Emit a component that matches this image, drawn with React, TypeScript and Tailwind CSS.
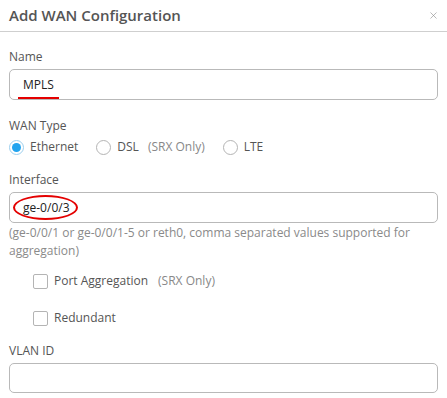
import { X } from 'lucide-react';

function Radio({ checked, label, note }: { checked?: boolean; label: string; note?: string }) {
    return (
        <label className="flex items-center">
            <span
                className={`flex h-[15px] w-[15px] items-center justify-center rounded-full border bg-white ${
                    checked ? 'border-[#9ccfee]' : 'border-[#b4b4b4]'
                }`}
            >
                {checked && <span className="h-[9px] w-[9px] rounded-full bg-[#22a4ef]" />}
            </span>
            <span className="ml-[6px] text-[#555]">{label}</span>
            {note && <span className="ml-[9px] text-[#888]">{note}</span>}
        </label>
    );
}

function Check({ label, note }: { label: string; note?: string }) {
    return (
        <label className="flex items-center pl-[24px]">
            <span className="h-[15px] w-[15px] rounded-[2px] border border-[#b4b4b4] bg-white" />
            <span className="ml-[6px] text-[#555]">{label}</span>
            {note && <span className="ml-[10px] text-[#888]">{note}</span>}
        </label>
    );
}

export default function App() {
    return (
        <div
            className="h-[398px] w-[447px] overflow-hidden bg-white text-[12px]"
            style={{ fontFamily: '"Open Sans", sans-serif' }}
        >
            {/* Cabeçalho */}
            <div className="flex h-[32px] items-center justify-between border-b border-[#cfcfcf] pl-[9px] pr-[8px]">
                <h1 className="text-[15px] font-semibold text-[#555]">Add WAN Configuration</h1>
                <X size={11} strokeWidth={1.3} className="text-[#888]" />
            </div>

            <div className="flex flex-col px-[9px] pt-[16px]">
                <div className="text-[#555]">Name</div>
                <div className="relative mt-[3px] flex h-[31px] items-center rounded-[5px] border border-[#b9b9b9] pl-[13px] text-[#222]">
                    MPLS
                    <span className="absolute bottom-[0px] left-[8px] h-[2px] w-[41px] bg-[#e40000]" />
                </div>

                <div className="mt-[17px] text-[#555]">WAN Type</div>
                <div className="mt-[3px] flex items-center gap-[18px]">
                    <Radio checked label="Ethernet" />
                    <Radio label="DSL" note="(SRX Only)" />
                    <Radio label="LTE" />
                </div>

                <div className="mt-[15px] text-[#555]">Interface</div>
                <div className="relative mt-[3px] flex h-[31px] items-center rounded-[5px] border border-[#b9b9b9] pl-[13px] text-[#222]">
                    ge-0/0/3
                    <span className="absolute left-[3px] top-[2px] h-[25px] w-[65px] rounded-[50%] border-2 border-[#e40000]" />
                </div>
                <p className="mt-[1px] leading-[18px] text-[#8a8a8a]">
                    (ge-0/0/1 or ge-0/0/1-5 or reth0, comma separated values supported for aggregation)
                </p>

                <div className="mt-[12px] flex flex-col gap-[19px]">
                    <Check label="Port Aggregation" note="(SRX Only)" />
                    <Check label="Redundant" />
                </div>

                <div className="mt-[15px] text-[#555]">VLAN ID</div>
                <div className="mt-[3px] h-[30px] rounded-[5px] border border-[#b9b9b9]" />
            </div>
        </div>
    );
}
